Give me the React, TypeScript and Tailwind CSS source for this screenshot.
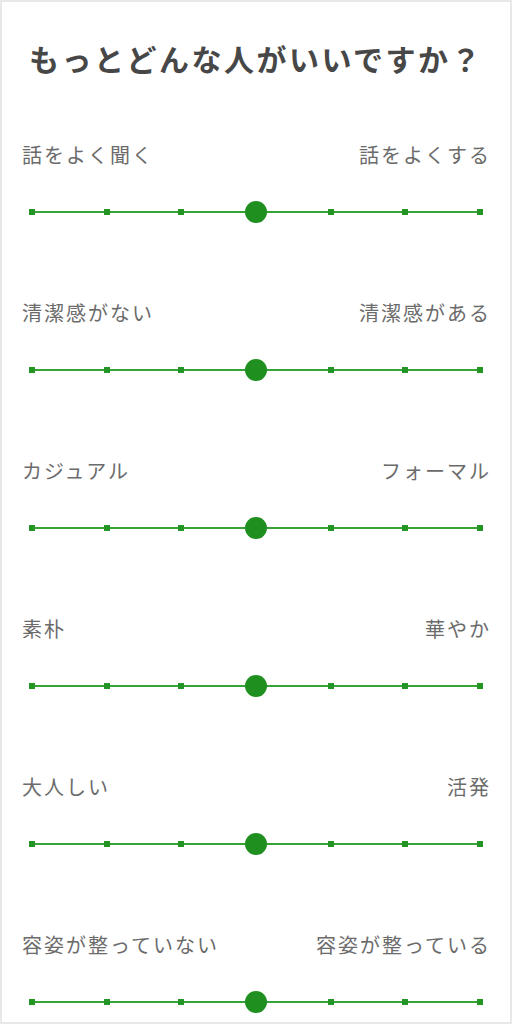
const rows: [string, string][] = [
  ['話をよく聞く', '話をよくする'],
  ['清潔感がない', '清潔感がある'],
  ['カジュアル', 'フォーマル'],
  ['素朴', '華やか'],
  ['大人しい', '活発'],
  ['容姿が整っていない', '容姿が整っている'],
];

const STEPS = 7;

function Scale({ value }: { value: number }) {
  return (
    <div className="relative ml-[30px] h-[22px] w-[448px]">
      <div className="absolute left-0 right-0 top-[10px] h-[2px] bg-[#35a335]" />
      {Array.from({ length: STEPS }).map((_, i) =>
        i === value ? (
          <div
            key={i}
            className="absolute top-0 h-[22px] w-[22px] -translate-x-1/2 rounded-full bg-[#1f8f1f]"
            style={{ left: `${(i / (STEPS - 1)) * 100}%` }}
          />
        ) : (
          <div
            key={i}
            className="absolute top-[8px] h-[6px] w-[6px] -translate-x-1/2 bg-[#249424]"
            style={{ left: `${(i / (STEPS - 1)) * 100}%` }}
          />
        )
      )}
    </div>
  );
}

export default function App() {
  return (
    <div
      className="h-[1024px] w-[512px] overflow-hidden border-2 border-[#e8e8e8] bg-white"
      style={{ fontFamily: '"Noto Sans CJK JP", "Noto Sans", sans-serif' }}
    >
      <h1 className="pt-[38px] text-center text-[30px] font-bold leading-[36px] tracking-[2.5px] text-[#474747]">
        もっとどんな人がいいですか？
      </h1>
      <div className="mt-[65px]">
        {rows.map(([left, right]) => (
          <div key={left} className="flex h-[158px] flex-col">
            <div className="flex h-[28px] items-center justify-between pl-[20px] pr-[19px] text-[20px] leading-[28px] tracking-[2px] text-[#6b6b6b]">
              <span>{left}</span>
              <span>{right}</span>
            </div>
            <div className="mt-[32px]">
              <Scale value={3} />
            </div>
          </div>
        ))}
      </div>
    </div>
  );
}
